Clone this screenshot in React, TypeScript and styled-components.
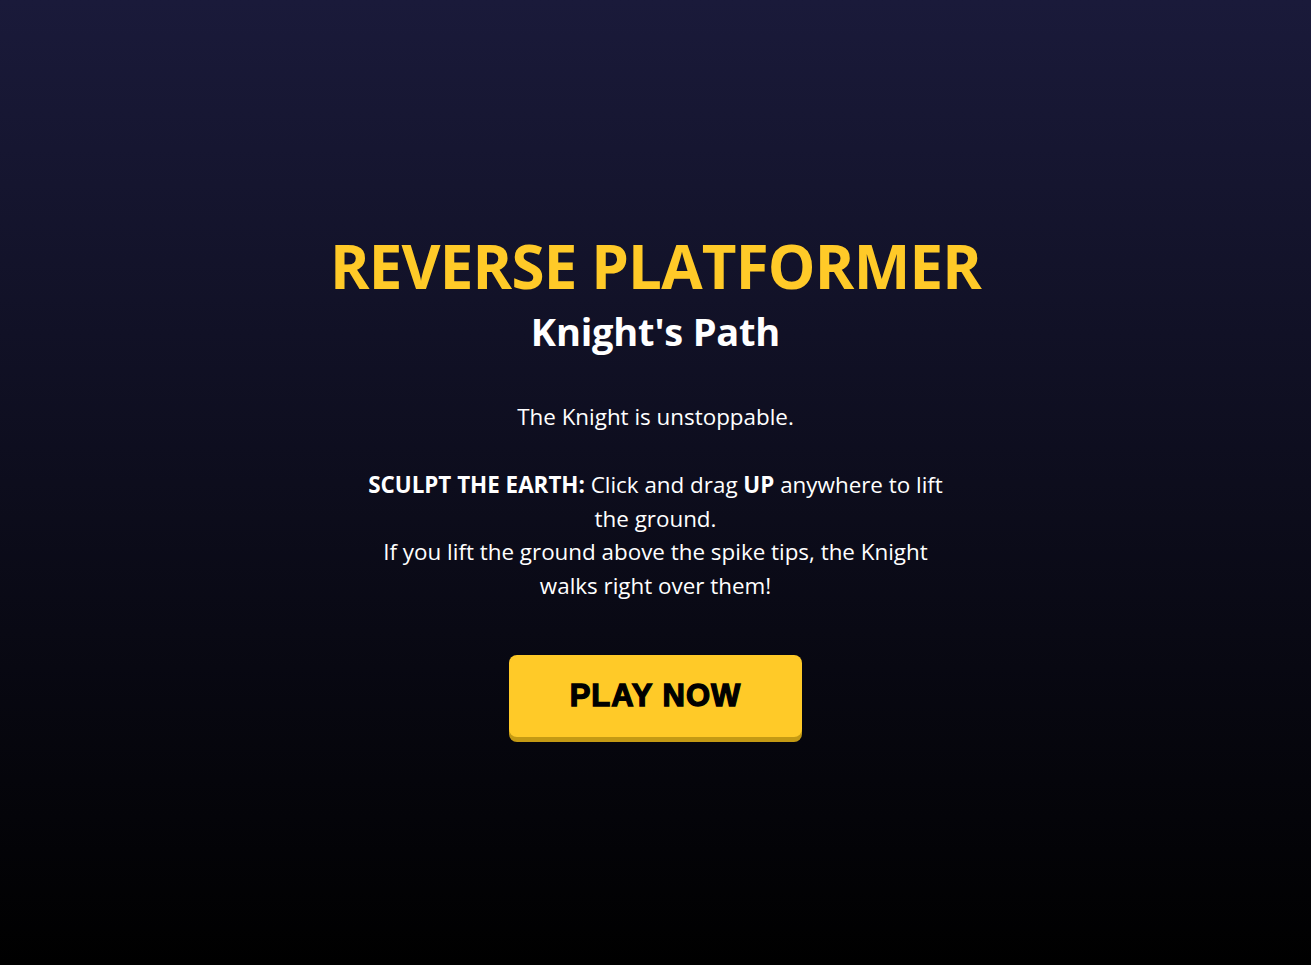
import React from "react";
import styled, { createGlobalStyle } from "styled-components";

const GlobalStyle = createGlobalStyle`
  html, body {
    margin: 0;
    padding: 0;
    height: 100%;
  }
  body {
    background: #000;
    color: #fff;
    font-family: "Segoe UI", "Open Sans", "Liberation Sans", sans-serif;
  }
`;

const Screen = styled.div`
  min-height: 100vh;
  display: flex;
  flex-direction: column;
  align-items: center;
  justify-content: center;
  text-align: center;
  background: linear-gradient(to bottom, #1a1a3a 0%, #000 100%);
  padding-top: 2px;
  box-sizing: border-box;
`;

const Title = styled.h1`
  margin: 0 0 7px;
  font-size: 60px;
  font-weight: 700;
  line-height: 1.2;
  color: #ffca28;
  letter-spacing: -0.8px;
`;

const Subtitle = styled.h2`
  margin: 0 0 46px;
  font-size: 38px;
  font-weight: 700;
  line-height: 1.2;
  color: #fff;
  letter-spacing: -0.2px;
`;

const Blurb = styled.p<{ $gap?: boolean }>`
  max-width: 600px;
  margin: ${(p) => (p.$gap ? "0 0 34px" : "0")};
  font-size: 22.4px;
  line-height: 33.6px;
  color: #fff;

  & b {
    font-weight: 700;
  }
`;

const PlayButton = styled.button`
  margin-top: 53px;
  padding: 23px 61px;
  border: none;
  border-radius: 8px;
  background: #ffca28;
  color: #000;
  font-family: "Liberation Sans", Arial, sans-serif;
  font-size: 31px;
  font-weight: 900;
  line-height: 36px;
  letter-spacing: 1px;
  -webkit-text-stroke: 1.3px #000;
  box-shadow: 0 5px 0 #c49a14;
  cursor: pointer;
`;

export default function App() {
  return (
    <>
      <GlobalStyle />
      <Screen>
        <Title>REVERSE PLATFORMER</Title>
        <Subtitle>Knight's Path</Subtitle>
        <Blurb $gap>The Knight is unstoppable.</Blurb>
        <Blurb>
          <b>SCULPT THE EARTH:</b> Click and drag <b>UP</b> anywhere to lift the ground.
          <br />
          If you lift the ground above the spike tips, the Knight walks right over them!
        </Blurb>
        <PlayButton>PLAY NOW</PlayButton>
      </Screen>
    </>
  );
}
